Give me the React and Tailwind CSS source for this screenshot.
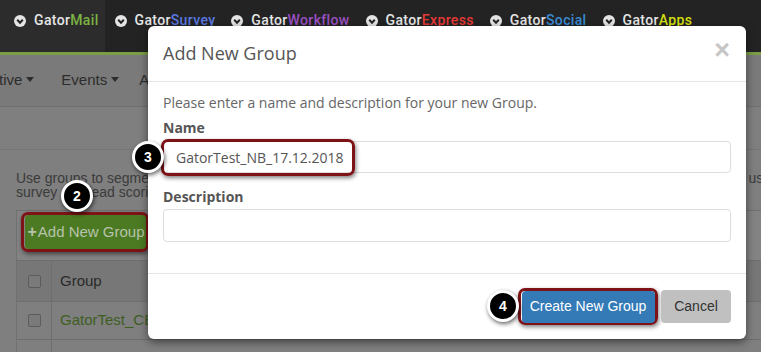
import React from "react";

const navItems = [
  { name: "Mail", color: "text-[#7cb342]" },
  { name: "Survey", color: "text-[#5a78e0]" },
  { name: "Workflow", color: "text-[#9a4fc2]" },
  { name: "Express", color: "text-[#e53935]" },
  { name: "Social", color: "text-[#3a8bd4]" },
  { name: "Apps", color: "text-[#d2df0e]" },
];

const NavIcon = () => (
  <svg width="12" height="12" viewBox="0 0 12 12" className="shrink-0">
    <circle cx="6" cy="6" r="6" fill="#e4e4e4" />
    <path d="M3.2 4.8 L6 7.7 L8.8 4.8" fill="none" stroke="#232323" strokeWidth="2" />
  </svg>
);

const Caret = () => (
  <svg width="8" height="5" viewBox="0 0 8 5" className="inline-block ml-[4px] mb-[3px]">
    <path d="M0 0 L8 0 L4 5 Z" fill="#2d2d2d" />
  </svg>
);

// numero de paso sobre la captura
const Badge = ({ n, className }) => (
  <div
    className={`absolute w-[32px] h-[32px] rounded-full bg-black border-[3px] border-white shadow-[1px_2px_4px_rgba(0,0,0,0.6)] flex items-center justify-center text-white text-[14px] font-bold font-['Liberation_Sans',Arial,sans-serif] ${className}`}
  >
    {n}
  </div>
);

const Highlight = ({ className }) => (
  <div
    className={`absolute border-[3px] border-[#7e1216] rounded-[7px] shadow-[1px_2px_4px_rgba(0,0,0,0.5)] ${className}`}
  />
);

const Checkbox = () => (
  <div className="w-[13px] h-[13px] rounded-[2px] border border-[#5c5c5c] bg-[#7a7a7a]" />
);

export default function App() {
  return (
    <div className="relative w-[761px] h-[352px] overflow-hidden bg-[#7f7f7f] font-['Liberation_Sans',Arial,sans-serif]">
      {/* Barra de productos */}
      <nav className="h-[52px] bg-[#232323] flex items-stretch font-['Roboto',sans-serif] font-medium text-[14px] tracking-[0.35px] text-[#e6e6e6]">
        {navItems.map((item, i) => (
          <div
            key={item.name}
            className={
              i === 0
                ? "flex items-center gap-[8px] pl-[14px] pr-[6px] bg-[#2c2c2c] pb-[11px]"
                : "flex items-center gap-[8px] pl-[10px] pr-[6px] pb-[11px]"
            }
          >
            <NavIcon />
            <span>
              Gator<span className={item.color}>{item.name}</span>
            </span>
          </div>
        ))}
      </nav>
      <div className="h-[3px] bg-[#7a9d45]" />

      {/* Submenu */}
      <div className="h-[52px] bg-[#7a7a7a] border-b border-[#6f6f6f] flex items-center text-[15px] text-[#2d2d2d]">
        <span className="-ml-[1px]">
          tive<Caret />
        </span>
        <span className="ml-[27px]">
          Events<Caret />
        </span>
        <span className="ml-[20px]">Automation</span>
      </div>
      <div className="h-[43px] border-b border-[#757575]" />

      {/* Contenido */}
      <div className="pt-[21px] text-[14px] leading-[14px] text-[#3b3b3b]">
        <div className="ml-[16px] w-[755px] flex justify-between whitespace-nowrap">
          <span>Use groups to segment your contacts</span>
          <span>use</span>
        </div>
        <div className="ml-[16px] whitespace-nowrap">survey and lead scoring.</div>
      </div>

      <div className="ml-[16px] mt-[11px] border-l border-t border-[#717171]">
        <div className="h-[49px] bg-[#838383] pl-[7px] pt-[4px]">
          <div className="w-[122px] h-[34px] ml-[1px] rounded-[4px] bg-[#4b7a22] flex items-center justify-center text-[15px] text-[#b7c3aa]">
            <span className="font-bold text-[16px] mr-[1px]">+</span>Add New Group
          </div>
        </div>
        <div className="h-[42px] bg-[#777777] border-t border-b border-[#6e6e6e] flex text-[15px] text-[#2a2a2a]">
          <div className="w-[35px] border-r border-[#6e6e6e] flex items-center justify-center">
            <Checkbox />
          </div>
          <div className="pl-[8px] flex items-center">Group</div>
        </div>
        <div className="h-[38px] border-b border-[#6e6e6e] flex text-[15px] text-[#3e5e1f]">
          <div className="w-[35px] border-r border-[#6e6e6e] flex items-center justify-center">
            <Checkbox />
          </div>
          <div className="pl-[8px] flex items-center">GatorTest_CB</div>
        </div>
        <div className="h-[30px] flex">
          <div className="w-[35px] border-r border-[#6e6e6e]" />
        </div>
      </div>

      <Highlight className="left-[21px] top-[212px] w-[128px] h-[40px]" />
      <Badge n="2" className="left-[61px] top-[180px]" />

      {/* Modal */}
      <div className="absolute left-[148px] top-[26px] w-[598px] h-[313px] bg-white rounded-[6px] shadow-[0_3px_9px_rgba(0,0,0,0.5)] flex flex-col font-['Open_Sans',sans-serif]">
        <div className="h-[56px] shrink-0 px-[15px] border-b border-[#e5e5e5] flex items-center justify-between">
          <h4 className="text-[18px] text-[#555555]">Add New Group</h4>
          <span className="mr-[1px] mb-[6px] text-[27px] leading-none font-bold text-[#c6c6c6] font-['Liberation_Sans',Arial,sans-serif]">
            ×
          </span>
        </div>
        <div className="flex-1 px-[15px] pt-[11px]">
          <p className="text-[14px] leading-[20px] text-[#666666]">
            Please enter a name and description for your new Group.
          </p>
          <label className="block mt-[5px] text-[14px] leading-[20px] font-bold text-[#555555]">Name</label>
          <div className="mt-[3px] h-[32px] border border-[#dddddd] rounded-[4px] px-[12px] flex items-center text-[14px] text-[#555555]">
            GatorTest_NB_17.12.2018
          </div>
          <label className="block mt-[14px] text-[14px] leading-[20px] font-bold text-[#555555]">Description</label>
          <div className="mt-[2px] h-[33px] border border-[#dddddd] rounded-[4px]" />
        </div>
        <div className="h-[66px] shrink-0 border-t border-[#e5e5e5] px-[15px] flex items-center justify-end gap-[3px] font-['Liberation_Sans',Arial,sans-serif] text-[14px]">
          <div className="w-[140px] h-[37px] border-[3px] border-[#7e1216] rounded-[7px] shadow-[1px_2px_4px_rgba(0,0,0,0.5)] flex items-center justify-center">
            <div className="w-[133px] h-[32px] rounded-[4px] bg-[#337ab7] text-white flex items-center justify-center">
              Create New Group
            </div>
          </div>
          <div className="w-[70px] h-[33px] rounded-[4px] bg-[#c0c0c0] text-[#333333] flex items-center justify-center">
            Cancel
          </div>
        </div>
      </div>

      <Highlight className="left-[161px] top-[139px] w-[194px] h-[37px]" />
      <Badge n="3" className="left-[132px] top-[141px]" />
      <Badge n="4" className="left-[487px] top-[290px]" />
    </div>
  );
}
